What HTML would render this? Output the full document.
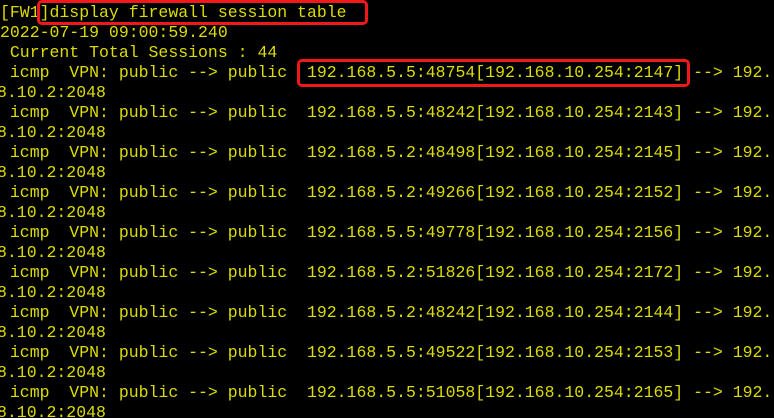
<!DOCTYPE html>
<html><head><meta charset="utf-8"><style>
html,body{margin:0;padding:0;background:#000;width:774px;height:418px;overflow:hidden}
.c{position:absolute;left:0;top:0;width:774px;height:418px;overflow:hidden}
pre{margin:0;position:absolute;left:0;top:3px;font-family:"Liberation Mono","Courier New",monospace;font-size:16.5px;line-height:20px;color:#dcdc00;white-space:pre}
.w{margin-left:-3px;display:inline-block}
.box{position:absolute;border:3px solid #f01818;border-radius:5px}
</style></head><body><div class="c">
<pre>[FW1]display firewall session table
2022-07-19 09:00:59.240
 Current Total Sessions : 44
 icmp  VPN: public --> public  192.168.5.5:48754[192.168.10.254:2147] --> 192.
<span class="w">8.10.2:2048</span>
 icmp  VPN: public --> public  192.168.5.5:48242[192.168.10.254:2143] --> 192.
<span class="w">8.10.2:2048</span>
 icmp  VPN: public --> public  192.168.5.2:48498[192.168.10.254:2145] --> 192.
<span class="w">8.10.2:2048</span>
 icmp  VPN: public --> public  192.168.5.2:49266[192.168.10.254:2152] --> 192.
<span class="w">8.10.2:2048</span>
 icmp  VPN: public --> public  192.168.5.5:49778[192.168.10.254:2156] --> 192.
<span class="w">8.10.2:2048</span>
 icmp  VPN: public --> public  192.168.5.2:51826[192.168.10.254:2172] --> 192.
<span class="w">8.10.2:2048</span>
 icmp  VPN: public --> public  192.168.5.2:48242[192.168.10.254:2144] --> 192.
<span class="w">8.10.2:2048</span>
 icmp  VPN: public --> public  192.168.5.5:49522[192.168.10.254:2153] --> 192.
<span class="w">8.10.2:2048</span>
 icmp  VPN: public --> public  192.168.5.5:51058[192.168.10.254:2165] --> 192.
<span class="w">8.10.2:2048</span></pre>
<div class="box" style="left:37px;top:0px;width:325px;height:19px"></div>
<div class="box" style="left:297px;top:59px;width:387px;height:22px"></div>
</div></body></html>
